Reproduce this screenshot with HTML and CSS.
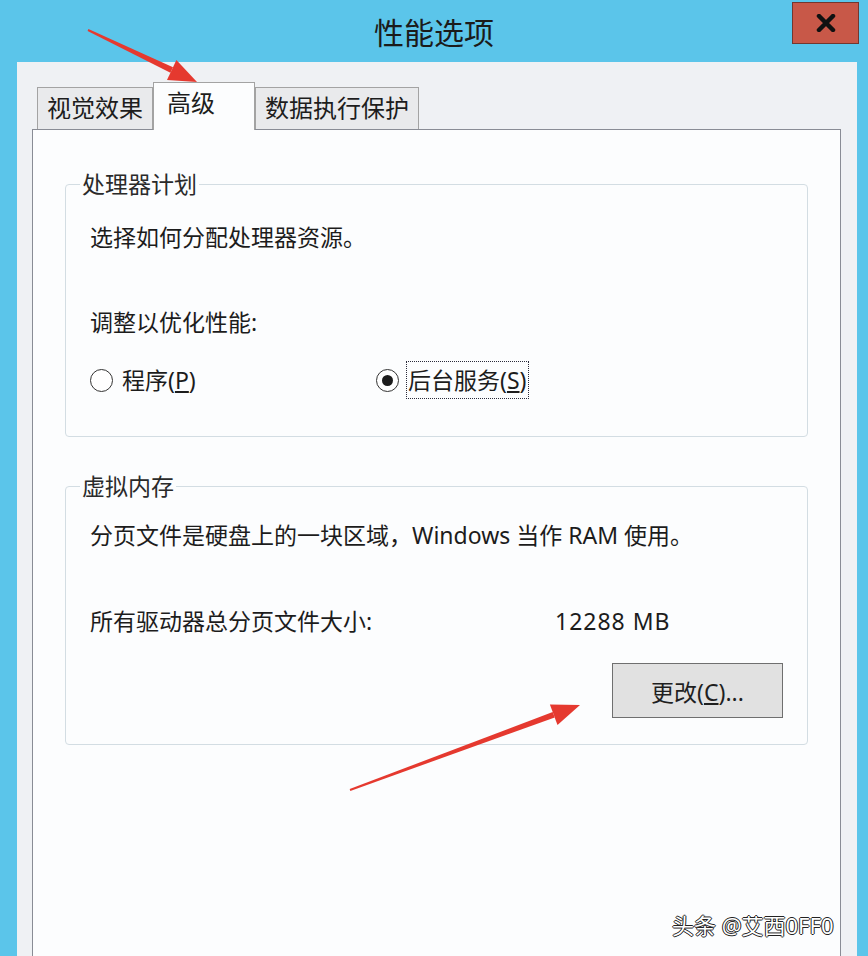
FILE: index.html
```html
<!DOCTYPE html>
<html lang="zh-CN">
<head>
  <meta charset="UTF-8">
  <title>性能选项</title>
  <link rel="stylesheet" href="styles.css">
</head>
<body>
  <div class="window">
    <div class="titlebar">
      <span></span>
      <h1 class="title">性能选项</h1>
      <button class="close" type="button" aria-label="关闭">
        <svg width="20" height="18" viewBox="0 0 20 18">
          <path d="M3 2 L17 16 M17 2 L3 16" stroke="#111" stroke-width="4.5" stroke-linecap="round"/>
        </svg>
      </button>
    </div>

    <div class="client">
      <div class="tabs">
        <div class="tab">视觉效果</div>
        <div class="tab active">高级</div>
        <div class="tab">数据执行保护</div>
      </div>

      <div class="tab-panel">
        <fieldset class="group group-cpu">
          <legend>处理器计划</legend>
          <p class="desc">选择如何分配处理器资源。</p>
          <p class="prompt">调整以优化性能:</p>
          <div class="radio-row">
            <label class="radio">
              <span class="radio-mark"></span>
              <span class="radio-text">程序(<u>P</u>)</span>
            </label>
            <label class="radio checked">
              <span class="radio-mark"></span>
              <span class="radio-text focused">后台服务(<u>S</u>)</span>
            </label>
          </div>
        </fieldset>

        <fieldset class="group group-mem">
          <legend>虚拟内存</legend>
          <p class="desc">分页文件是硬盘上的一块区域，Windows 当作 RAM 使用。</p>
          <div class="size-row">
            <span>所有驱动器总分页文件大小:</span>
            <span class="size">12288 MB</span>
          </div>
          <div class="actions">
            <button class="btn" type="button">更改(<u>C</u>)...</button>
          </div>
        </fieldset>
      </div>
    </div>

    <!-- red pointer arrows drawn on top of the dialog -->
    <svg class="marks" width="868" height="956" viewBox="0 0 868 956">
      <g fill="#e5392f">
        <polygon points="87.6,30.9 88.4,29.1 173,67.3 170.4,72.7" />
        <polygon points="197,82 167,79.9 176.4,60.1" />
        <polygon points="350.3,790.9 349.7,789.1 552.7,711.9 554.7,717.5" />
        <polygon points="580,705 557.5,725 549.9,704.4" />
      </g>
    </svg>

    <div class="watermark">头条 @艾西0FF0</div>
  </div>
</body>
</html>
```

FILE: styles.css
```css
body {
  margin: 0;
  overflow: hidden;
  font-family: "Noto Sans", "Noto Sans CJK SC", sans-serif;
  color: #1c1c1c;
}
.window {
  position: relative;
  width: 868px;
  height: 956px;
  background-color: #5bc5ea;
  display: flex;
  flex-direction: column;
  overflow: hidden;
}
.titlebar {
  height: 62px;
  flex: none;
  display: grid;
  grid-template-columns: 1fr auto 1fr;
  align-items: start;
}
.title {
  margin: 0;
  padding-top: 2px;
  font-size: 30px;
  font-weight: normal;
  line-height: 62px;
  color: #1b1b1b;
}
.close {
  justify-self: end;
  margin: 2px 9px 0 0;
  width: 67px;
  height: 42px;
  padding: 0;
  background-color: #c85848;
  border: 1px solid #73372f;
  display: flex;
  align-items: center;
  justify-content: center;
}
.client {
  flex: 1;
  margin: 0 11px 0 17px;
  padding: 20px 16px 0 15px;
  background-color: #eff1f4;
  display: flex;
  flex-direction: column;
}

/* tab strip */
.tabs {
  display: flex;
  align-items: flex-end;
  padding-left: 5px;
  margin-bottom: -1px;
  position: relative;
  z-index: 1;
}
.tab {
  height: 42px;
  box-sizing: border-box;
  margin-bottom: 1px;
  padding: 0 9px;
  border: 1px solid #a3a3a3;
  border-bottom: none;
  background-color: #e9eaec;
  font-size: 24px;
  line-height: 40px;
  color: #1d1d1d;
}
.tab.active {
  height: 48px;
  margin: 0;
  padding: 0 39px 0 13px;
  background-color: #fcfdfe;
}
.tab-panel {
  flex: 1;
  padding-top: 39px;
  background-color: #fcfdfe;
  border: 1px solid #898c95;
  border-bottom: none;
}

/* group boxes */
.group {
  margin: 0 32px;
  padding: 0 24px 36px;
  min-width: 0;
  border: 1px solid #d3dde3;
  border-radius: 4px;
}
.group legend {
  margin-left: -10px;
  padding: 0 2px;
  font-size: 23px;
  line-height: 30px;
  color: #2a2a2a;
}
.group p {
  margin: 0;
  font-size: 23px;
  line-height: 30px;
}
.group-cpu .desc {
  margin-top: 23px;
}
.group-cpu .prompt {
  margin-top: 55px;
}
.group-mem {
  margin-top: 34px;
  padding-bottom: 26px;
}
.group-mem .desc {
  margin-top: 19px;
}

/* radio buttons */
.radio-row {
  margin-top: 23px;
  height: 40px;
  display: grid;
  grid-template-columns: 286px auto;
  align-items: center;
}
.radio {
  display: flex;
  align-items: center;
  gap: 7px;
  font-size: 23px;
}
.radio-mark {
  width: 23px;
  height: 23px;
  box-sizing: border-box;
  border: 1.5px solid #333;
  border-radius: 50%;
  background-color: #fff;
  display: grid;
  place-items: center;
}
.radio.checked .radio-mark::after {
  content: "";
  width: 11px;
  height: 11px;
  border-radius: 50%;
  background-color: #1c1c1c;
}
.radio-text {
  padding: 0 1px;
  border: 1px dotted transparent;
  line-height: 36px;
}
.radio-text.focused {
  padding: 0 2px 0 1px;
  border-color: #2a2a3a;
}

/* virtual memory */
.size-row {
  margin-top: 56px;
  display: grid;
  grid-template-columns: 465px auto;
  font-size: 23px;
  line-height: 30px;
}
.size {
  letter-spacing: 1px;
}
.actions {
  margin-top: 27px;
  display: flex;
  justify-content: flex-end;
}
.btn {
  width: 171px;
  height: 55px;
  padding: 0;
  background-color: #e1e1e1;
  border: 1px solid #6f6f6f;
  font-family: inherit;
  font-size: 23px;
  color: #1f1f1f;
}

/* overlays */
.marks {
  position: absolute;
  left: 0;
  top: 0;
  pointer-events: none;
}
.watermark {
  position: absolute;
  left: 672px;
  top: 910px;
  font-size: 22px;
  line-height: 30px;
  color: #fff;
  text-shadow: -1px 0 #222, 1px 0 #222, 0 -1px #222, 0 1px #222;
}
```
